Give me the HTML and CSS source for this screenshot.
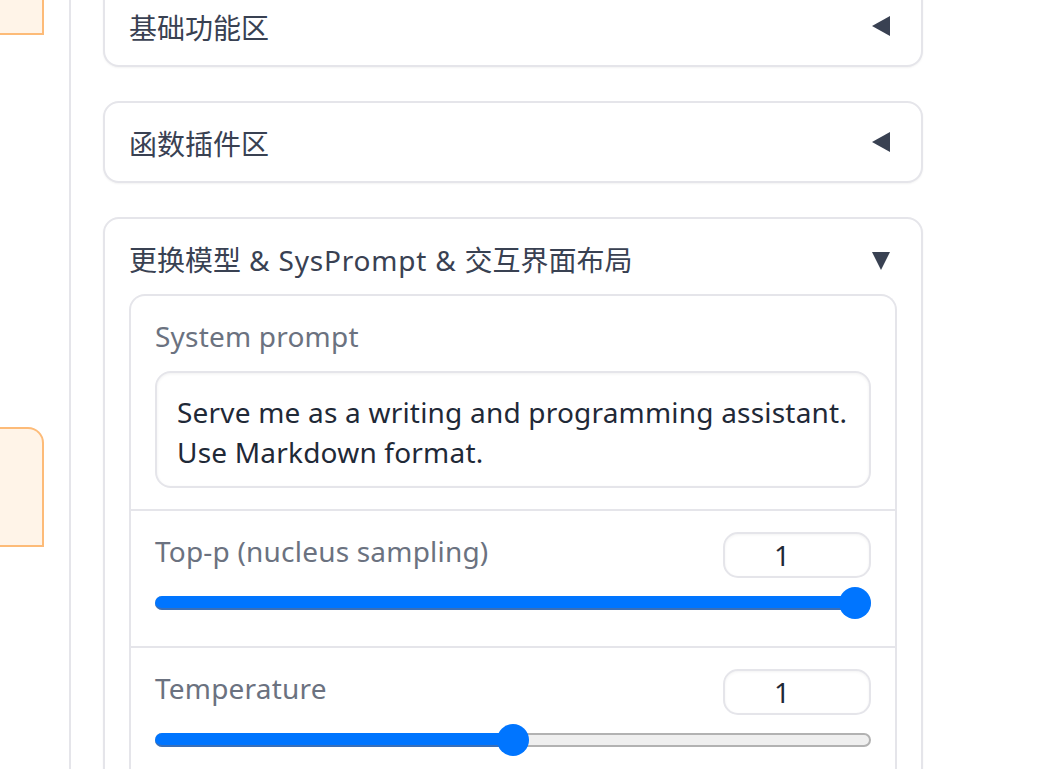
FILE: index.html
```html
<!DOCTYPE html>
<html lang="zh">
<head>
<meta charset="utf-8">
<title>Settings</title>
<link rel="stylesheet" href="styles.css">
</head>
<body>
<div class="page">
  <aside class="chat-col">
    <div class="bubble bubble-top"></div>
    <div class="bubble bubble-mid"></div>
  </aside>
  <main class="panel-col">
    <section class="card card-first">
      <div class="card-head">
        <span class="card-title">基础功能区</span>
        <svg class="caret" width="20" height="20" viewBox="0 0 20 20"><polygon points="19,0 19,20 1,10" fill="#394152"/></svg>
      </div>
    </section>
    <section class="card">
      <div class="card-head">
        <span class="card-title">函数插件区</span>
        <svg class="caret" width="20" height="20" viewBox="0 0 20 20"><polygon points="19,0 19,20 1,10" fill="#394152"/></svg>
      </div>
    </section>
    <section class="card card-open">
      <div class="card-head">
        <span class="card-title">更换模型<span class="latin"> &amp; SysPrompt &amp; </span>交互界面布局</span>
        <svg class="caret caret-down" width="20" height="20" viewBox="0 0 20 20"><polygon points="1,1 19,1 10,19" fill="#394152"/></svg>
      </div>
      <div class="inner">
        <div class="row row-prompt">
          <div class="label">System prompt</div>
          <div class="textbox">Serve me as a writing and programming assistant.<br>Use Markdown format.</div>
        </div>
        <div class="row row-slider">
          <div class="slider-head">
            <div class="label">Top-p (nucleus sampling)</div>
            <div class="num">1</div>
          </div>
          <div class="slider" style="--v: 1">
            <div class="track"></div>
            <div class="fill"></div>
            <div class="rail"><div class="thumb"></div></div>
          </div>
        </div>
        <div class="row row-slider">
          <div class="slider-head">
            <div class="label">Temperature</div>
            <div class="num">1</div>
          </div>
          <div class="slider" style="--v: 0.5">
            <div class="track"></div>
            <div class="fill"></div>
            <div class="rail"><div class="thumb"></div></div>
          </div>
        </div>
      </div>
    </section>
  </main>
</div>
</body>
</html>
```

FILE: styles.css
```css
* { box-sizing: border-box; }
html, body {
  margin: 0;
  padding: 0;
  background: #ffffff;
  height: 100%;
  overflow: hidden;
}
body {
  font-family: "Noto Sans", "Noto Sans CJK SC", sans-serif;
  color: #394152;
}
.page {
  display: flex;
  height: 769px;
}
.chat-col {
  width: 71px;
  flex: none;
  border-right: 2px solid #e5e5ea;
  display: flex;
  flex-direction: column;
}
.bubble {
  width: 44px;
  background: #fff4e8;
  border: 2px solid #fdbb78;
  border-left: none;
}
.bubble-top {
  height: 35px;
  border-top: none;
}
.bubble-mid {
  margin-top: 392px;
  height: 120px;
  border-top-right-radius: 16px;
}
.panel-col {
  padding-left: 32px;
  width: 852px;
  display: flex;
  flex-direction: column;
  gap: 34px;
}
.card {
  width: 820px;
  border: 2px solid #e5e5ea;
  border-radius: 16px;
  background: #fff;
  box-shadow: 0 1px 2px rgba(0, 0, 0, 0.05);
  padding: 17px 30px 17px 24px;
  flex: none;
}
.card-first {
  margin-top: -15px;
}
.card-open {
  padding-right: 24px;
  padding-bottom: 0;
}
.card-head {
  height: 44px;
  display: flex;
  align-items: center;
  justify-content: space-between;
}
.card-title {
  font-size: 28px;
  color: #394152;
  margin-top: 2px;
}
.latin { letter-spacing: 0.8px; }
.caret { display: block; }
.card-open .card-head { padding-right: 6px; }
.caret-down { margin-top: 5px; }
.inner {
  margin-top: 14px;
  border: 2px solid #e5e5ea;
  border-radius: 16px 16px 0 0;
  border-bottom: none;
}
.row {
  padding: 21px 24px 27px 24px;
  border-top: 2px solid #e5e5ea;
}
.row:first-child { border-top: none; padding-top: 22px; padding-bottom: 21px; }
.label {
  font-size: 28px;
  line-height: 36px;
  color: #6b7280;
  letter-spacing: 0.2px;
}
.textbox {
  margin-top: 17px;
  height: 117px;
  border: 2px solid #e5e5ea;
  border-radius: 16px;
  padding: 19px 20px;
  font-size: 28px;
  line-height: 40px;
  color: #1f2937;
  letter-spacing: 0.2px;
  box-shadow: inset 0 1px 3px rgba(0, 0, 0, 0.06);
}
.slider-head {
  display: flex;
  justify-content: space-between;
  align-items: flex-start;
}
.slider-head .label { margin-top: 1px; }
.num {
  width: 148px;
  height: 46px;
  border: 2px solid #e5e5ea;
  border-radius: 15px;
  box-shadow: inset 0 1px 3px rgba(0, 0, 0, 0.05);
  display: flex;
  align-items: center;
  justify-content: center;
  padding-right: 30px;
  font-size: 28px;
  color: #1f2937;
}
.slider {
  position: relative;
  height: 32px;
  margin-top: 9px;
}
.track {
  position: absolute;
  left: 0;
  right: 0;
  top: 9px;
  height: 14px;
  border-radius: 7px;
  background: #efefef;
  border: 2px solid #b2b2b2;
}
.fill {
  position: absolute;
  left: 0;
  top: 9px;
  height: 14px;
  width: calc(16px + (100% - 32px) * var(--v));
  border-radius: 7px;
  background: #0075ff;
  border-bottom: 2px solid #3a6fb8;
}
.rail {
  position: absolute;
  left: 16px;
  right: 16px;
  top: 0;
  height: 32px;
}
.thumb {
  position: absolute;
  top: 0;
  left: calc(100% * var(--v));
  width: 32px;
  height: 32px;
  margin-left: -16px;
  border-radius: 50%;
  background: #0075ff;
}
```
